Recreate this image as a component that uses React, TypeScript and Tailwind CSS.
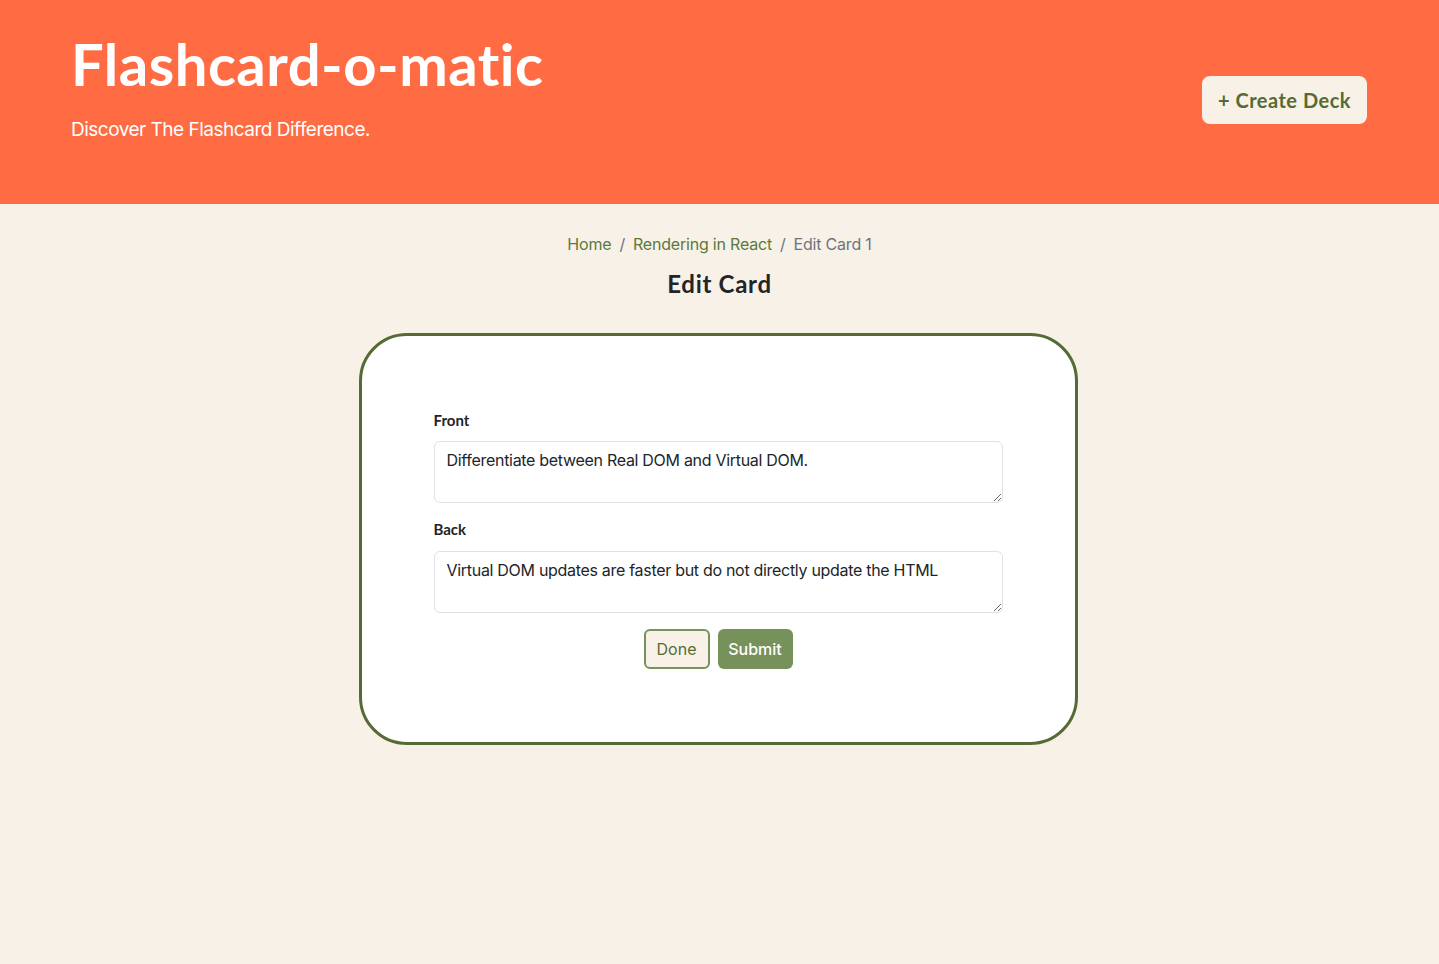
import { useState } from 'react';

const display = "font-['Lato',_'Liberation_Sans',_sans-serif]";
const body = "font-['Inter',_'Liberation_Sans',_sans-serif]";

function Header() {
  return (
    <header className="bg-[#ff6b43] h-[204px] flex justify-between items-start px-[71px] pr-[72px]">
      <div className="pt-[29px]">
        <h1 className={`${display} text-white text-[58px] font-bold leading-[70px] tracking-[0.5px]`}>
          Flashcard-o-matic
        </h1>
        <p className={`${body} text-white text-[19px] leading-[28px] mt-[17px] tracking-[-0.5px]`}>
          Discover The Flashcard Difference.
        </p>
      </div>
      <button
        className={`${display} mt-[76px] h-[48px] w-[165px] rounded-[8px] bg-[#f8f1e7] text-[#556b35] text-[20px] font-bold tracking-[0.5px] flex items-center justify-center`}
      >
        + Create Deck
      </button>
    </header>
  );
}

function Breadcrumb() {
  return (
    <nav className={`${body} text-[16px] leading-[24px] flex justify-center gap-[8px] text-[#5a7a3c] tracking-[-0.2px]`}>
      <span>Home</span>
      <span className="text-[#6c757d]">/</span>
      <span>Rendering in React</span>
      <span className="text-[#6c757d]">/</span>
      <span className="text-[#6c757d]">Edit Card 1</span>
    </nav>
  );
}

export default function App() {
  const [front, setFront] = useState('Differentiate between Real DOM and Virtual DOM.');
  const [back, setBack] = useState('Virtual DOM updates are faster but do not directly update the HTML');

  return (
    <div className="min-h-[964px] bg-[#f8f1e7]">
      <Header />
      <main className="flex flex-col items-center pt-[28px]">
        <Breadcrumb />
        <h2 className={`${display} text-[#212529] text-[24px] font-bold leading-[32px] mt-[12px] tracking-[0.7px]`}>
          Edit Card
        </h2>
        <div className="mt-[33px] mr-[3px] w-[719px] bg-white border-[3px] border-[#556b35] rounded-[48px] px-[72px] pt-[72px] pb-[73px]">
          <form className="flex flex-col" onSubmit={(e) => e.preventDefault()}>
            <label className={`${display} text-[#212529] text-[15px] font-bold leading-[24px] mb-[9px]`}>Front</label>
            <textarea
              value={front}
              onChange={(e) => setFront(e.target.value)}
              className={`${body} h-[62px] w-full border border-[#dee2e6] rounded-[6px] px-[12px] py-[6px] text-[16px] leading-[24px] text-[#212529] tracking-[-0.3px] outline-none`}
            />
            <label className={`${display} text-[#212529] text-[15px] font-bold leading-[24px] mt-[14px] mb-[10px]`}>Back</label>
            <textarea
              value={back}
              onChange={(e) => setBack(e.target.value)}
              className={`${body} h-[62px] w-full border border-[#dee2e6] rounded-[6px] px-[12px] py-[6px] text-[16px] leading-[24px] text-[#212529] tracking-[-0.3px] outline-none`}
            />
            <div className="flex justify-center gap-[8px] mt-[16px]">
              <button
                type="button"
                className={`${body} h-[40px] w-[66px] rounded-[6px] border-2 border-[#77915b] bg-[#f8f1e7] text-[#556b35] text-[16px]`}
              >
                Done
              </button>
              <button
                type="submit"
                className={`${body} h-[40px] w-[75px] rounded-[6px] bg-[#77915b] text-white text-[16px] font-medium`}
              >
                Submit
              </button>
            </div>
          </form>
        </div>
      </main>
    </div>
  );
}
